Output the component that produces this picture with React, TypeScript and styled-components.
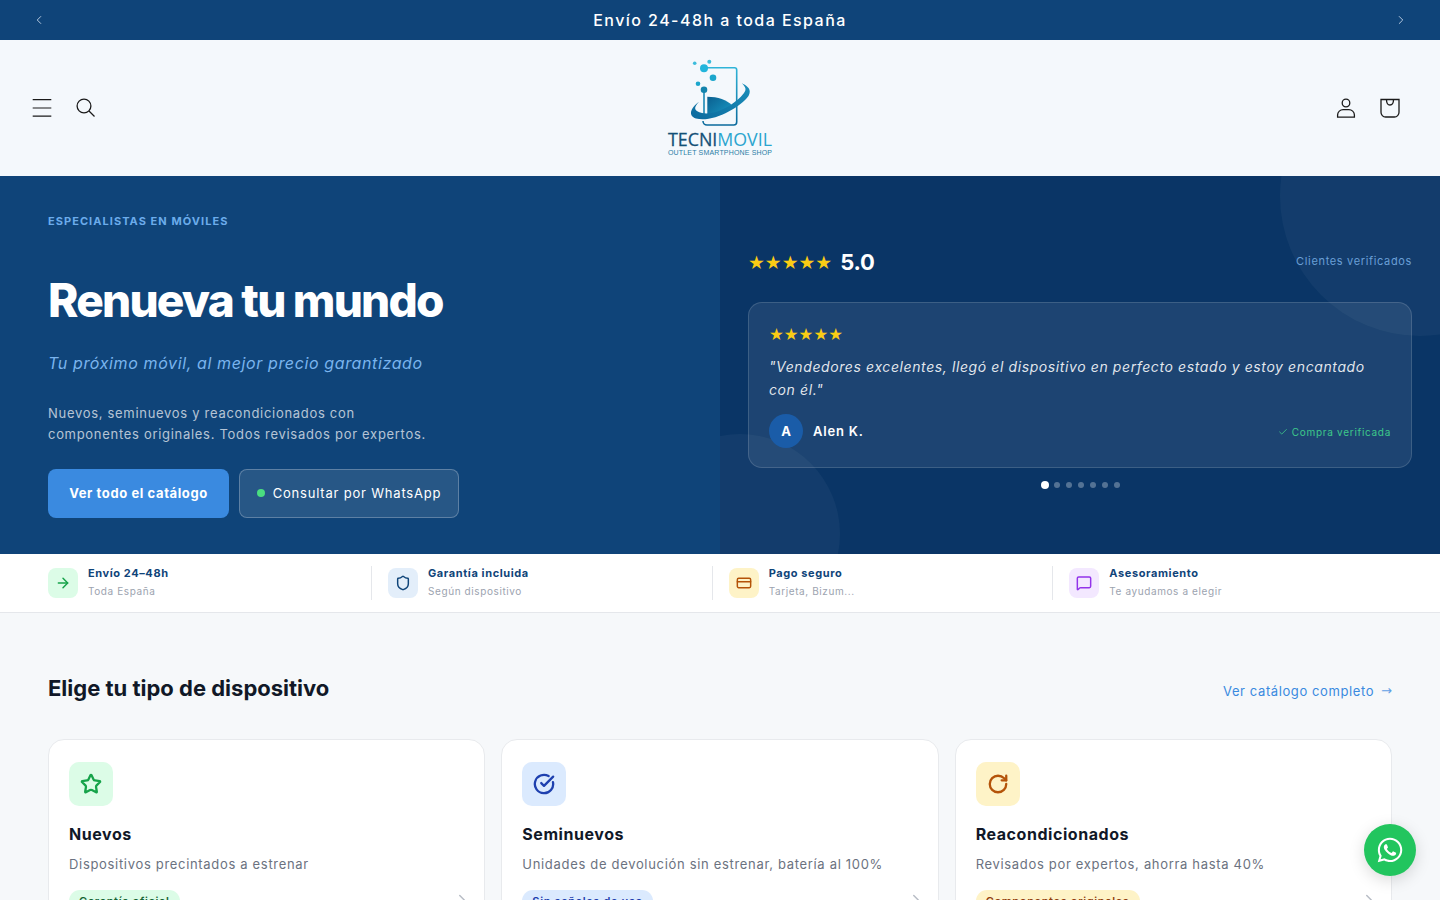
import styled, { createGlobalStyle } from "styled-components"
import { ArrowRight, Check, ChevronLeft, ChevronRight, CircleCheckBig, CreditCard, MessageSquare, RotateCw, Shield, Star } from "lucide-react"
import { FaWhatsapp } from "react-icons/fa"

const GlobalStyle = createGlobalStyle`
    * { box-sizing: border-box; }
    html, body { margin: 0; padding: 0; }
    body {
        font-family: Inter, "Liberation Sans", sans-serif;
        background: #f6f8fa;
        color: #111827;
        letter-spacing: 0.6px;
    }
    a { text-decoration: none; color: inherit; }
`

const Announcement = styled.div`
    height: 40px;
    background: #0f4479;
    color: #fff;
    display: flex;
    align-items: center;
    justify-content: space-between;
    padding: 0 32px 1px;
    font-size: 16px;
    font-weight: 500;
    letter-spacing: 1.45px;
`
const ArrowBtn = styled.span`
    display: flex;
    color: #c9d8ea;
`
const Header = styled.header`
    height: 136px;
    background: #f4f8fc;
    display: grid;
    grid-template-columns: 1fr auto 1fr;
    align-items: center;
    padding: 0 32px;
`
const IconRow = styled.div<{ $end?: boolean }>`
    display: flex;
    align-items: center;
    gap: 24px;
    justify-content: ${({ $end }) => ($end ? "flex-end" : "flex-start")};
    padding-right: ${({ $end }) => ($end ? 8 : 0)}px;
    color: #1a1a1a;
    svg { display: block; }
`
const LogoBox = styled.div`
    display: flex;
`
const Hero = styled.section`
    height: 378px;
    display: grid;
    grid-template-columns: 1fr 1fr;
`
const HeroLeft = styled.div`
    background: #0f4479;
    padding: 38px 48px 36px;
    display: flex;
    flex-direction: column;
    align-items: flex-start;
`
const Eyebrow = styled.div`
    font-size: 11px;
    line-height: 14px;
    font-weight: 700;
    letter-spacing: 1.05px;
    color: #6caceb;
`
const Title = styled.h1`
    margin: 44px 0 0;
    font-size: 46px;
    line-height: 56px;
    font-weight: 800;
    letter-spacing: -1.8px;
    color: #fff;
`
const Tagline = styled.p`
    margin: 23px 0 0;
    font-size: 16px;
    line-height: 24px;
    font-style: italic;
    letter-spacing: 0.62px;
    color: #7ab4ee;
`
const Desc = styled.p`
    margin: 28px 0 0;
    font-size: 13px;
    line-height: 21px;
    letter-spacing: 0.7px;
    color: rgba(255, 255, 255, 0.7);
`
const Actions = styled.div`
    margin-top: 24px;
    display: flex;
    gap: 10px;
`
const PrimaryBtn = styled.a`
    height: 49px;
    width: 181px;
    padding-bottom: 2px;
    display: flex;
    align-items: center;
    justify-content: center;
    border-radius: 8px;
    background: #3a8ae0;
    color: #fff;
    font-size: 13px;
    font-weight: 700;
    letter-spacing: 0.6px;
`
const GhostBtn = styled.a`
    height: 49px;
    width: 220px;
    padding-bottom: 2px;
    display: flex;
    align-items: center;
    justify-content: center;
    gap: 8px;
    border-radius: 8px;
    border: 1px solid rgba(255, 255, 255, 0.25);
    background: rgba(255, 255, 255, 0.1);
    color: #fff;
    font-size: 13px;
    letter-spacing: 0.8px;
`
const GreenDot = styled.i`
    width: 8px;
    height: 8px;
    border-radius: 50%;
    background: #4ade80;
`
const HeroRight = styled.div`
    position: relative;
    overflow: hidden;
    background: #0a3566;
    padding: 6px 28px 0;
    display: flex;
    flex-direction: column;
    justify-content: center;
`
const Blob = styled.div<{ $top?: boolean }>`
    position: absolute;
    border-radius: 50%;
    background: rgba(255, 255, 255, 0.04);
    ${({ $top }) =>
        $top
            ? "width: 280px; height: 280px; top: -120px; right: -120px;"
            : "width: 200px; height: 200px; bottom: -80px; left: -80px;"}
`
const RatingRow = styled.div`
    position: relative;
    display: flex;
    align-items: center;
    justify-content: space-between;
    margin-bottom: 26px;
`
const RatingLeft = styled.div`
    display: flex;
    align-items: center;
    gap: 8px;
`
const Score = styled.span`
    font-size: 22px;
    line-height: 28px;
    font-weight: 700;
    letter-spacing: -0.2px;
    color: #fff;
`
const Verified = styled.span`
    font-size: 11px;
    letter-spacing: 0.65px;
    color: #6a9fd6;
    margin-top: -1px;
`
const Stars = styled.div<{ $size: number }>`
    padding-top: 4px;
    color: #facc15;
    font-family: "DejaVu Sans", sans-serif;
    font-size: ${({ $size }) => $size}px;
    line-height: 1;
    letter-spacing: 0;
`
const ReviewCard = styled.div`
    position: relative;
    height: 166px;
    padding: 20px;
    border-radius: 14px;
    border: 1px solid rgba(255, 255, 255, 0.14);
    background: rgba(255, 255, 255, 0.08);
`
const Quote = styled.p`
    margin: 12px 0 0;
    font-size: 14px;
    line-height: 23px;
    font-style: italic;
    letter-spacing: 0.6px;
    color: rgba(255, 255, 255, 0.88);
`
const ReviewFoot = styled.div`
    display: flex;
    align-items: center;
    margin-top: 13px;
`
const Avatar = styled.span`
    width: 34px;
    height: 34px;
    border-radius: 50%;
    background: #1a5ca8;
    color: #fff;
    display: flex;
    align-items: center;
    justify-content: center;
    font-size: 13px;
    font-weight: 700;
    letter-spacing: 0;
`
const Author = styled.span`
    margin-left: 10px;
    font-size: 13px;
    font-weight: 600;
    letter-spacing: 0.8px;
    color: #fff;
`
const Purchase = styled.span`
    margin-left: auto;
    margin-top: 2px;
    display: flex;
    align-items: center;
    gap: 4px;
    font-size: 10px;
    letter-spacing: 0.7px;
    color: #3ec98a;
`
const Dots = styled.div`
    position: relative;
    display: flex;
    align-items: center;
    justify-content: center;
    gap: 6px;
    margin-top: 13px;
`
const Dot = styled.i<{ $active?: boolean }>`
    width: ${({ $active }) => ($active ? 8 : 6)}px;
    height: ${({ $active }) => ($active ? 8 : 6)}px;
    margin-right: ${({ $active }) => ($active ? -1 : 0)}px;
    border-radius: 50%;
    background: ${({ $active }) => ($active ? "#fff" : "rgba(255,255,255,0.3)")};
`
const TrustBar = styled.div`
    height: 59px;
    background: #fff;
    border-bottom: 1px solid #e5e7eb;
    padding: 12px 48px;
    display: grid;
    grid-template-columns: 324px 340.67px 340.67px 1fr;
`
const TrustItem = styled.div<{ $first?: boolean; $last?: boolean }>`
    display: flex;
    align-items: center;
    gap: 10px;
    padding-left: ${({ $first }) => ($first ? 0 : 16)}px;
    border-right: ${({ $last }) => ($last ? "none" : "1px solid #e5e7eb")};
`
const TrustIcon = styled.span<{ $bg: string; $fg: string }>`
    width: 30px;
    height: 30px;
    border-radius: 8px;
    flex: none;
    display: flex;
    align-items: center;
    justify-content: center;
    background: ${({ $bg }) => $bg};
    color: ${({ $fg }) => $fg};
`
const TrustText = styled.div`
    padding-bottom: 2px;
`
const TrustTitle = styled.div`
    font-size: 11px;
    line-height: 14px;
    font-weight: 700;
    letter-spacing: 0.6px;
    color: #0f4479;
`
const TrustSub = styled.div`
    margin-top: 5px;
    font-size: 10px;
    line-height: 13px;
    letter-spacing: 0.6px;
    color: #9ca3af;
`
const Section = styled.section`
    padding: 59px 48px 40px;
`
const SectionHead = styled.div`
    display: flex;
    align-items: center;
    justify-content: space-between;
    margin-bottom: 35px;
`
const SectionTitle = styled.h2`
    margin: 0;
    font-size: 22px;
    line-height: 32px;
    font-weight: 700;
    letter-spacing: 0;
    color: #111827;
`
const SectionLink = styled.a`
    display: flex;
    align-items: center;
    gap: 7px;
    font-size: 13px;
    letter-spacing: 0.6px;
    color: #3a8ae0;
    margin-top: 5px;
`
const LinkArrow = styled.span`
    font-family: "DejaVu Sans", sans-serif;
    font-size: 13px;
    letter-spacing: 0;
    opacity: 0.8;
`
const CardGrid = styled.div`
    display: grid;
    grid-template-columns: repeat(3, 1fr);
    gap: 16px;
`
const Card = styled.article`
    position: relative;
    background: #fff;
    border: 1px solid #e8eaed;
    border-radius: 16px;
    padding: 22px 20px;
`
const CardIcon = styled.span<{ $bg: string; $fg: string }>`
    width: 44px;
    height: 44px;
    border-radius: 10px;
    display: flex;
    align-items: center;
    justify-content: center;
    background: ${({ $bg }) => $bg};
    color: ${({ $fg }) => $fg};
`
const CardTitle = styled.h3`
    margin: 18px 0 0;
    font-size: 16px;
    line-height: 20px;
    font-weight: 700;
    letter-spacing: 0.55px;
    color: #111827;
`
const CardDesc = styled.p`
    margin: 10px 0 0;
    font-size: 13px;
    line-height: 20px;
    letter-spacing: 0.68px;
    color: #6b7280;
`
const Badge = styled.span<{ $bg: string; $fg: string }>`
    display: inline-block;
    margin-top: 16px;
    padding: 3px 10px;
    border-radius: 999px;
    font-size: 11px;
    line-height: 16px;
    font-weight: 600;
    letter-spacing: 0.65px;
    background: ${({ $bg }) => $bg};
    color: ${({ $fg }) => $fg};
`
const CardArrow = styled.span`
    position: absolute;
    right: 13px;
    top: 151px;
    display: flex;
    color: #b8bdc6;
`
const WhatsApp = styled.a`
    position: fixed;
    right: 24px;
    bottom: 24px;
    width: 52px;
    height: 52px;
    border-radius: 50%;
    background: #22c55e;
    color: #fff;
    display: flex;
    align-items: center;
    justify-content: center;
    box-shadow: 0 4px 16px rgba(0, 0, 0, 0.15);
`

const Logo = () => (
    <svg width="120" height="100" viewBox="0 0 120 100">
        <defs>
            <linearGradient id="phone" x1="0" y1="0" x2="0" y2="1">
                <stop offset="0" stopColor="#2fb4d8" />
                <stop offset="1" stopColor="#0b6a9c" />
            </linearGradient>
            <linearGradient id="sail" x1="0" y1="0" x2="1" y2="1">
                <stop offset="0" stopColor="#0a5f8f" />
                <stop offset="1" stopColor="#1a9cc8" />
            </linearGradient>
            <linearGradient id="swoosh" x1="0" y1="1" x2="1" y2="0">
                <stop offset="0" stopColor="#0c6a9e" />
                <stop offset="1" stopColor="#1a8fba" />
            </linearGradient>
        </defs>
        <path d="M45 9.7H74.5a2.2 2.2 0 0 1 2.2 2.2V64a3 3 0 0 1-3 3H47a4 4 0 0 1-4-4" fill="none" stroke="url(#phone)" strokeWidth="1.6" />
        <path d="M47.3 38.7C58 38.7 67 42 71.7 47 65 53 56 59.3 47.3 59.3Z" fill="url(#sail)" />
        <path d="M44 32V57" stroke="#1a87b4" strokeWidth="1.6" />
        <path d="M39 43.7C30 50 28 58 36 60.5 52 65 80 50 88.5 38 92 32 88 28 81.7 25.3 86 29 86.5 32 84 35 76 46 55 58 42 55 34 53 33 50 39 43.7Z" fill="url(#swoosh)" />
        <circle cx="44" cy="10.3" r="4" fill="#22b5dc" />
        <circle cx="53" cy="19.7" r="3.3" fill="#1ba6cc" />
        <circle cx="49.3" cy="3.7" r="2" fill="#3cbcdc" />
        <circle cx="34.7" cy="5.3" r="1.8" fill="#3cbcdc" />
        <circle cx="38" cy="25.7" r="2.3" fill="#1ba6cc" />
        <circle cx="44" cy="31.7" r="3.3" fill="#1484ad" />
        <text x="8" y="88" textLength="104" lengthAdjust="spacingAndGlyphs" fontFamily="'Open Sans', sans-serif" fontSize="18" letterSpacing="0">
            <tspan fill="#135077" stroke="#135077" strokeWidth="0.3">TECNI</tspan>
            <tspan fill="#2aa5cf">MOVIL</tspan>
        </text>
        <text x="8" y="96.5" textLength="104" lengthAdjust="spacing" fontFamily="'Liberation Sans', sans-serif" fontSize="7" fill="#2b7ea6" letterSpacing="0">
            OUTLET SMARTPHONE SHOP
        </text>
    </svg>
)

const MenuIcon = () => (
    <svg width="20" height="20" viewBox="0 0 20 20" fill="none" stroke="currentColor" strokeWidth="1.2">
        <path d="M.7 1.7h18.6M.7 10h18.6M.7 18.1h18.6" />
    </svg>
)
const SearchIcon = () => (
    <svg width="20" height="20" viewBox="0 0 20 20" fill="none" stroke="currentColor" strokeWidth="1.3">
        <circle cx="8" cy="8" r="6.9" />
        <path d="M13 13 18.5 18.5" />
    </svg>
)
const AccountIcon = () => (
    <svg width="20" height="20" viewBox="0 0 20 20" fill="none" stroke="currentColor" strokeWidth="1.3">
        <circle cx="10" cy="5" r="3.8" />
        <path d="M1.6 19.2V17c0-3.3 2.7-5.3 5.5-5.3h5.8c2.8 0 5.5 2 5.5 5.3v2.2Z" />
    </svg>
)
const BagIcon = () => (
    <svg width="20" height="20" viewBox="0 0 20 20" fill="none" stroke="currentColor" strokeWidth="1.3">
        <path d="M1 1.5h18v12.8a4.6 4.6 0 0 1-4.6 4.7H5.6a4.6 4.6 0 0 1-4.6-4.7Z" />
        <path d="M6.5 1.5c0 4 1.4 5.5 3.5 5.5s3.5-1.5 3.5-5.5" />
    </svg>
)

const trustItems = [
    { title: "Envío 24–48h", sub: "Toda España", bg: "#dcfce7", fg: "#16a34a", Icon: ArrowRight },
    { title: "Garantía incluida", sub: "Según dispositivo", bg: "#e3eefa", fg: "#0f4479", Icon: Shield },
    { title: "Pago seguro", sub: "Tarjeta, Bizum...", bg: "#fef3c7", fg: "#b45309", Icon: CreditCard },
    { title: "Asesoramiento", sub: "Te ayudamos a elegir", bg: "#f3e8ff", fg: "#9333ea", Icon: MessageSquare },
]

const cards = [
    { title: "Nuevos", desc: "Dispositivos precintados a estrenar", badge: "Garantía oficial", bg: "#dcfce7", fg: "#16a34a", badgeFg: "#166534", Icon: Star },
    { title: "Seminuevos", desc: "Unidades de devolución sin estrenar, batería al 100%", badge: "Sin señales de uso", bg: "#dbeafe", fg: "#1e40af", badgeFg: "#1e40af", Icon: CircleCheckBig },
    { title: "Reacondicionados", desc: "Revisados por expertos, ahorra hasta 40%", badge: "Componentes originales", bg: "#fef3c7", fg: "#b45309", badgeFg: "#92400e", Icon: RotateCw },
]

export default function App() {
    return (
        <>
            <GlobalStyle />
            <Announcement>
                <ArrowBtn><ChevronLeft size={14} strokeWidth={1.5} /></ArrowBtn>
                <span>Envío 24-48h a toda España</span>
                <ArrowBtn><ChevronRight size={14} strokeWidth={1.5} /></ArrowBtn>
            </Announcement>
            <Header>
                <IconRow>
                    <MenuIcon />
                    <SearchIcon />
                </IconRow>
                <LogoBox><Logo /></LogoBox>
                <IconRow $end>
                    <AccountIcon />
                    <BagIcon />
                </IconRow>
            </Header>
            <Hero>
                <HeroLeft>
                    <Eyebrow>ESPECIALISTAS EN MÓVILES</Eyebrow>
                    <Title>Renueva tu mundo</Title>
                    <Tagline>Tu próximo móvil, al mejor precio garantizado</Tagline>
                    <Desc>
                        Nuevos, seminuevos y reacondicionados con
                        <br />
                        componentes originales. Todos revisados por expertos.
                    </Desc>
                    <Actions>
                        <PrimaryBtn>Ver todo el catálogo</PrimaryBtn>
                        <GhostBtn><GreenDot />Consultar por WhatsApp</GhostBtn>
                    </Actions>
                </HeroLeft>
                <HeroRight>
                    <Blob $top />
                    <Blob />
                    <RatingRow>
                        <RatingLeft>
                            <Stars $size={18.8}>★★★★★</Stars>
                            <Score>5.0</Score>
                        </RatingLeft>
                        <Verified>Clientes verificados</Verified>
                    </RatingRow>
                    <ReviewCard>
                        <Stars $size={16.5}>★★★★★</Stars>
                        <Quote>"Vendedores excelentes, llegó el dispositivo en perfecto estado y estoy encantado con él."</Quote>
                        <ReviewFoot>
                            <Avatar>A</Avatar>
                            <Author>Alen K.</Author>
                            <Purchase><Check size={10} />Compra verificada</Purchase>
                        </ReviewFoot>
                    </ReviewCard>
                    <Dots>
                        {[0, 1, 2, 3, 4, 5, 6].map((i) => (
                            <Dot key={i} $active={i === 0} />
                        ))}
                    </Dots>
                </HeroRight>
            </Hero>
            <TrustBar>
                {trustItems.map(({ title, sub, bg, fg, Icon }, i) => (
                    <TrustItem key={title} $first={i === 0} $last={i === 3}>
                        <TrustIcon $bg={bg} $fg={fg}><Icon size={16} strokeWidth={2.2} /></TrustIcon>
                        <TrustText>
                            <TrustTitle>{title}</TrustTitle>
                            <TrustSub>{sub}</TrustSub>
                        </TrustText>
                    </TrustItem>
                ))}
            </TrustBar>
            <Section>
                <SectionHead>
                    <SectionTitle>Elige tu tipo de dispositivo</SectionTitle>
                    <SectionLink>Ver catálogo completo <LinkArrow>→</LinkArrow></SectionLink>
                </SectionHead>
                <CardGrid>
                    {cards.map(({ title, desc, badge, bg, fg, badgeFg, Icon }) => (
                        <Card key={title}>
                            <CardIcon $bg={bg} $fg={fg}><Icon size={22} strokeWidth={2.5} /></CardIcon>
                            <CardTitle>{title}</CardTitle>
                            <CardDesc>{desc}</CardDesc>
                            <Badge $bg={bg} $fg={badgeFg}>{badge}</Badge>
                            <CardArrow><ChevronRight size={18} /></CardArrow>
                        </Card>
                    ))}
                </CardGrid>
            </Section>
            <WhatsApp><FaWhatsapp size={28} /></WhatsApp>
        </>
    )
}
